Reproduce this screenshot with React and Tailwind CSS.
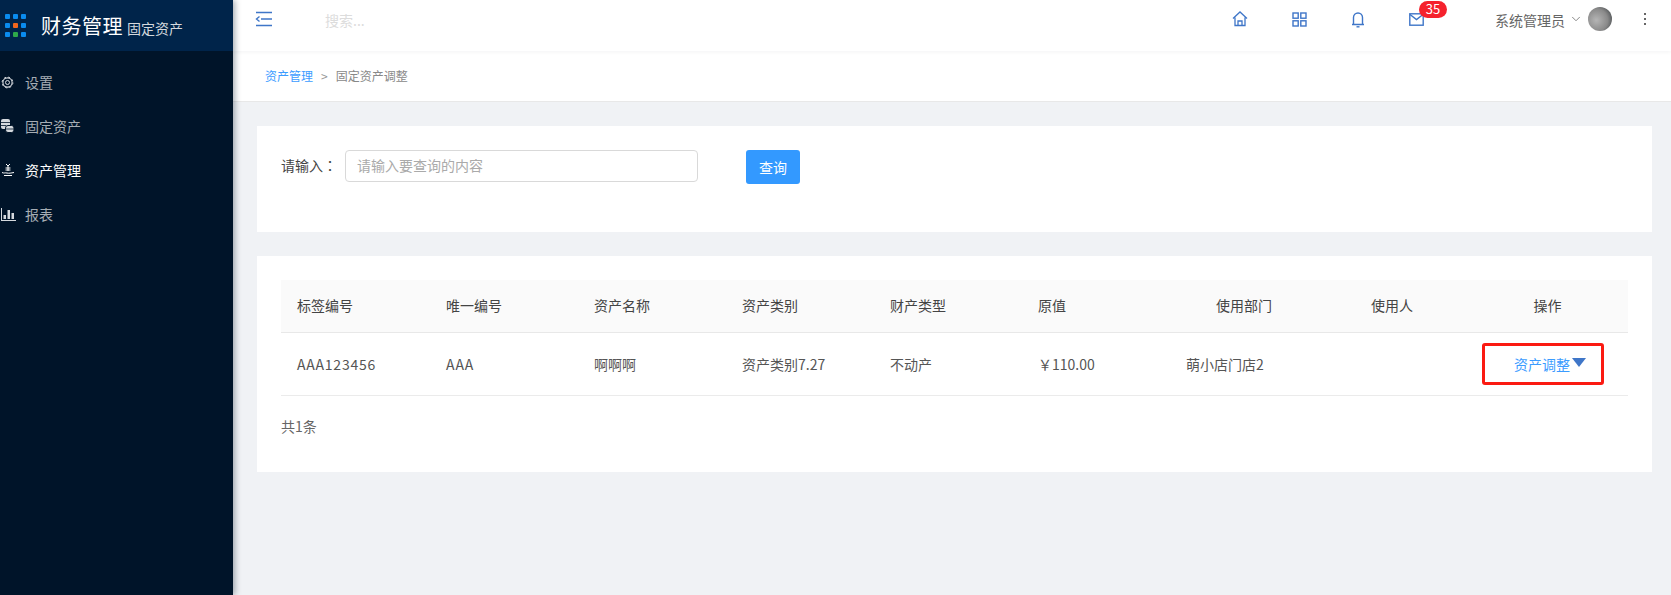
import React from "react";
import { ChevronDown } from "lucide-react";

const font = { fontFamily: '"Noto Sans CJK SC", "Noto Sans", sans-serif' };

const Logo = () => (
  <div className="grid grid-cols-3 gap-[4px] w-[20px]">
    {["#0a8cf0", "#0a8cf0", "#0a8cf0", "#0a8cf0", "#f0661e", "#0a8cf0", "#0a8cf0", "#2ea84a", "#0a8cf0"].map((c, i) => (
      <span key={i} className="w-[5px] h-[5px] rounded-[1px]" style={{ backgroundColor: c }} />
    ))}
  </div>
);

const MenuIcon = () => (
  <svg width="18" height="16" viewBox="0 0 18 16" fill="none" stroke="#3f76c8" strokeWidth="1.4">
    <path d="M1 1.5h16M6 8h11M1 14.5h16" />
    <path d="M4.5 5.5L1.5 8l3 2.5" />
  </svg>
);

const GearIcon = () => (
  <svg width="13" height="13" viewBox="0 0 13 13" fill="none" stroke="#d5d9de">
    <circle cx="6.5" cy="6.5" r="4.6" strokeWidth="1.1" />
    <circle cx="6.5" cy="6.5" r="5.4" strokeWidth="1" strokeDasharray="2 2.24" />
    <circle cx="6.5" cy="6.5" r="2" strokeWidth="1" />
  </svg>
);

const AssetIcon = () => (
  <svg width="13" height="14" viewBox="0 0 13 14">
    <rect x="0" y="0" width="9" height="10" rx="2" fill="#d5d9de" />
    <path d="M0 3.5h9M0 6.5h5" stroke="#001429" strokeWidth="0.8" />
    <rect x="4.5" y="6.5" width="8.5" height="7" rx="2.5" fill="#d5d9de" stroke="#001429" strokeWidth="1" />
    <path d="M5 10h8" stroke="#001429" strokeWidth="0.8" />
  </svg>
);

const ManageIcon = () => (
  <svg width="14" height="14" viewBox="0 0 14 14" fill="none" stroke="#fff" strokeWidth="1">
    <path d="M5 1l2 2 2-2M7 3v5M4.5 5h5M4.5 7h5" />
    <path d="M1 9.5c2 1 3 0 5 .5s4 0 7-.5M3 12.5h8" />
  </svg>
);

const ChartIcon = () => (
  <svg width="15" height="13" viewBox="0 0 15 13" fill="#d5d9de">
    <path d="M0 0h1v12h14v1H0z" />
    <rect x="2.5" y="7" width="2.5" height="4" />
    <rect x="6.5" y="2" width="2.5" height="9" />
    <rect x="10.5" y="5" width="2.5" height="6" />
  </svg>
);

const HomeIcon = () => (
  <svg width="16" height="16" viewBox="0 0 16 16" fill="none" stroke="#3f76c8" strokeWidth="1.3">
    <path d="M1 7.5L8 1l7 6.5M3 6.5V14.5h10V6.5" />
    <path d="M6 14.5v-4.5h4v4.5" />
  </svg>
);

const GridIcon = () => (
  <svg width="15" height="15" viewBox="0 0 15 15" fill="none" stroke="#3f76c8" strokeWidth="1.4">
    <rect x="1" y="1" width="5.2" height="5.2" />
    <rect x="8.8" y="1" width="5.2" height="5.2" />
    <rect x="1" y="8.8" width="5.2" height="5.2" />
    <rect x="8.8" y="8.8" width="5.2" height="5.2" />
  </svg>
);

const BellIcon = () => (
  <svg width="14" height="17" viewBox="0 0 14 17" fill="none" stroke="#3f76c8" strokeWidth="1.4">
    <path d="M1 13.5h12M2.5 13.5V6.5a4.5 4.5 0 0 1 9 0v7" />
    <path d="M5.5 15.8h3" />
  </svg>
);

const MailIcon = () => (
  <svg width="15" height="13" viewBox="0 0 15 13" fill="none" stroke="#3f76c8" strokeWidth="1.4">
    <rect x="0.8" y="0.8" width="13.4" height="11.4" />
    <path d="M1 1.5l6.5 5 6.5-5" />
  </svg>
);

const navItems = [
  { label: "设置", icon: <GearIcon /> },
  { label: "固定资产", icon: <AssetIcon /> },
  { label: "资产管理", icon: <ManageIcon />, active: true },
  { label: "报表", icon: <ChartIcon /> },
];

const headers = [
  { label: "标签编号", cls: "pl-4" },
  { label: "唯一编号", cls: "pl-4" },
  { label: "资产名称", cls: "pl-0" },
  { label: "资产类别", cls: "pl-0" },
  { label: "财产类型", cls: "pl-0" },
  { label: "原值", cls: "pl-0" },
  { label: "使用部门", cls: "pl-[46px]" },
  { label: "使用人", cls: "pl-[15px]" },
  { label: "操作", cls: "text-center pr-[3px]" },
];

const cells = ["AAA123456", "AAA", "啊啊啊", "资产类别7.27", "不动产", "￥110.00", "萌小店门店2", ""];
const cellPad = ["pl-4 tracking-[0.8px]", "pl-4 tracking-[1px]", "pl-0", "pl-0", "pl-0", "pl-0", "pl-4", "pl-4"];
const gridCols = "grid grid-cols-[149px_164px_148px_148px_148px_132px_186px_114px_1fr]";

export default function App() {
  return (
    <div className="flex w-[1671px] h-[595px] overflow-hidden bg-[#f0f2f5] text-[14px]" style={font}>
      {/* Sidebar */}
      <aside className="w-[233px] shrink-0 bg-[#001429] relative z-10 shadow-[2px_0_6px_rgba(0,21,41,0.35)]">
        <div className="h-[51px] bg-[#00244a] flex items-center pl-[5px]">
          <Logo />
          <span className="ml-[16px] text-[20px] tracking-[0.5px] text-white leading-none">财务管理</span>
          <span className="ml-[4px] mt-[4px] text-[14px] text-[#d5d9de] leading-none">固定资产</span>
        </div>
        <nav className="pt-[9px]">
          {navItems.map((item) => (
            <div
              key={item.label}
              className={`h-[44px] flex items-center ${item.active ? "text-white" : "text-[#a6adb4]"}`}
            >
              <span className="w-[25px] flex justify-start pl-[1px]">{item.icon}</span>
              <span className="text-[14px] leading-none">{item.label}</span>
            </div>
          ))}
        </nav>
      </aside>

      <main className="flex-1 min-w-0">
        {/* Top bar */}
        <header className="h-[51px] bg-white flex items-start shadow-[0_1px_4px_rgba(0,21,41,0.05)] relative">
          <div className="ml-[22px] mt-[11px]">
            <MenuIcon />
          </div>
          <span className="ml-[52px] mt-[10px] text-[14px] text-[#dcdcdc] leading-[20px]">搜索...</span>
          <div className="ml-auto flex items-center h-[38px]">
            <div className="mr-[44px]"><HomeIcon /></div>
            <div className="mr-[44px]"><GridIcon /></div>
            <div className="mr-[44px]"><BellIcon /></div>
            <div className="relative mr-[71px] h-[13px]">
              <MailIcon />
              <span className="absolute left-[10px] top-[-12px] w-[28px] h-[17px] rounded-full bg-[#f5222d] text-white text-[13px] leading-[16px] text-center">
                35
              </span>
            </div>
            <span className="text-[#666] text-[14px] mt-[2px] mr-[4px]">系统管理员</span>
            <ChevronDown size={14} strokeWidth={1.5} color="#777" className="mr-[5px]" />
            <div className="w-[24px] h-[24px] rounded-full bg-[radial-gradient(circle_at_35%_55%,#b5b5b5,#8a8a8a_55%,#2f3538)] mr-[32px]" />
            <div className="flex flex-col gap-[3px] mr-[25px]">
              <span className="w-[2px] h-[2px] bg-[#666]" />
              <span className="w-[2px] h-[2px] bg-[#666]" />
              <span className="w-[2px] h-[2px] bg-[#666]" />
            </div>
          </div>
        </header>

        {/* Breadcrumb */}
        <div className="h-[51px] bg-white border-b border-[#e8e8e8] flex items-center pl-[32px] text-[12px]">
          <span className="text-[#3b9cff]">资产管理</span>
          <span className="mx-[8px] text-[#999]">&gt;</span>
          <span className="text-[#888]">固定资产调整</span>
        </div>

        {/* Content */}
        <div className="pt-[24px] pl-[24px] pr-[19px]">
          <section className="h-[106px] bg-white pt-[24px] pl-[24px] flex items-start">
            <label className="h-[32px] leading-[30px] text-[#444] text-[14px] w-[64px] shrink-0 whitespace-nowrap">
              请输入<span className="font-['Noto_Sans_CJK_TC']">：</span>
            </label>
            <div className="h-[32px] w-[353px] border border-[#d9d9d9] rounded-[4px] px-[11px] leading-[29px] text-[#aaa] text-[14px]">
              请输入要查询的内容
            </div>
            <button className="ml-[48px] w-[54px] h-[34px] rounded-[3px] bg-[#3399ff] text-white text-[14px]">查询</button>
          </section>

          <section className="h-[216px] mt-[24px] bg-white pt-[24px] px-[24px]">
            <div className={`${gridCols} h-[53px] bg-[#fafafa] border-b border-[#e8e8e8] items-center text-[#444] pb-[2px]`}>
              {headers.map((h) => (
                <div key={h.label} className={h.cls}>{h.label}</div>
              ))}
            </div>
            <div className={`${gridCols} h-[63px] border-b border-[#ebebeb] items-center text-[#555]`}>
              {cells.map((c, i) => (
                <div key={i} className={cellPad[i]}>{c}</div>
              ))}
              <div className="ml-[12px] w-[122px] h-[42px] border-[3px] border-[#fb1a12] rounded-[3px] flex items-center justify-end pr-[15px] text-[#3b9cff]">
                资产调整
                <span className="ml-[2px] mb-[4px] w-0 h-0 border-x-[7px] border-x-transparent border-t-[9px] border-t-[#3f76c8]" />
              </div>
            </div>
            <div className="mt-[20px] text-[#666] text-[14px] leading-[20px]">共1条</div>
          </section>
        </div>
      </main>
    </div>
  );
}
